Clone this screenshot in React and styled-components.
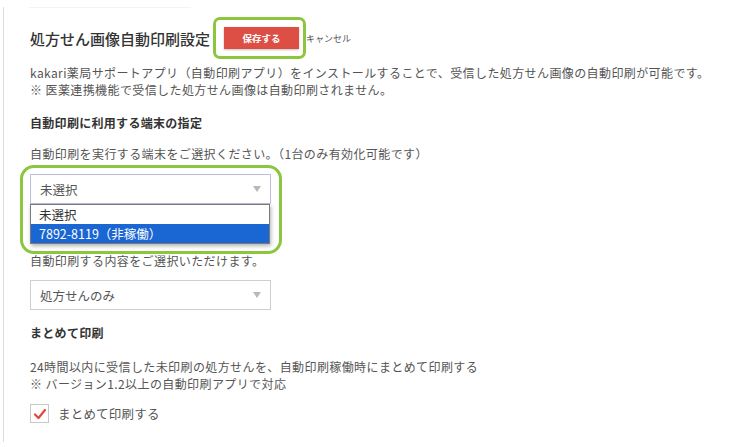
import React from 'react';
import styled, { createGlobalStyle } from 'styled-components';

const GlobalStyle = createGlobalStyle`
  html, body {
    margin: 0;
    padding: 0;
    background: #fff;
  }
  body {
    font-family: "Noto Sans CJK JP", "Noto Sans", sans-serif;
    color: #555;
  }
`;

const Panel = styled.div`
  position: relative;
  margin: 7px 0 0 3px;
  height: 435px;
  border-left: 1px solid #dcdcdc;
  padding: 10px 0 0 26px;
  box-sizing: border-box;

  &::before {
    content: '';
    position: absolute;
    top: 0;
    left: 25px;
    width: 162px;
    height: 1px;
    background: #f3f3f3;
  }
`;

const Header = styled.div`
  display: flex;
  align-items: center;
  height: 42px;
`;

const Title = styled.h1`
  margin: 0 3px 0 0;
  font-size: 15px;
  font-weight: 500;
  color: #333;
  letter-spacing: 0;
`;

const Highlight = styled.div`
  border: 3px solid #8cc63f;
  border-radius: 7px;
  padding: 7px 4px 7px 8px;
  display: flex;
`;

const SaveButton = styled.button`
  width: 75px;
  height: 22px;
  border: none;
  background: #dd4f45;
  box-shadow: 0 1px 2px rgba(0, 0, 0, 0.25);
  color: #fff;
  font-family: inherit;
  font-size: 9.5px;
  font-weight: 700;
  cursor: pointer;
`;

const CancelLink = styled.span`
  font-size: 9px;
  color: #555;
`;

const Text = styled.p`
  margin: ${(p) => p.mt || 0}px 0 0;
  font-size: 12px;
  line-height: 17px;
  letter-spacing: 0.4px;
  color: #555;
`;

const Heading = styled.h2`
  margin: ${(p) => p.mt || 0}px 0 0;
  font-size: 12px;
  line-height: 17px;
  font-weight: 700;
  letter-spacing: 0.3px;
  color: #333;
`;

const SelectWrap = styled.div`
  position: relative;
  margin-top: ${(p) => p.mt || 0}px;
  width: 241px;
`;

const SelectBox = styled.div`
  height: 30px;
  box-sizing: border-box;
  border: 1px solid ${(p) => (p.focused ? '#bcbfdc' : '#cfcfcf')};
  background: #fff;
  display: flex;
  align-items: center;
  justify-content: space-between;
  padding: 0 9px 0 9px;
  font-size: 12.5px;
  color: #555;
`;

const Arrow = styled.span`
  width: 0;
  height: 0;
  border-left: 4px solid transparent;
  border-right: 4px solid transparent;
  border-top: 6px solid #b8b8b8;
`;

const OptionList = styled.ul`
  position: absolute;
  top: 30px;
  left: 0;
  width: 240px;
  margin: 0;
  padding: 0;
  list-style: none;
  background: #fff;
  border: 1px solid #7a7a7a;
  box-sizing: border-box;
  box-shadow: 1px 2px 4px rgba(0, 0, 0, 0.3);
  z-index: 2;
`;

const Option = styled.li`
  height: 19px;
  line-height: 19px;
  padding-left: 8px;
  font-size: 12.5px;
  color: ${(p) => (p.active ? '#fff' : '#333')};
  background: ${(p) => (p.active ? '#1a66d2' : '#fff')};
`;

const FocusRing = styled.div`
  position: absolute;
  left: -10px;
  top: -9px;
  width: 262px;
  height: 89px;
  box-sizing: border-box;
  border: 3px solid #8cc63f;
  border-radius: 14px;
  pointer-events: none;
  z-index: 3;
`;

const CheckRow = styled.label`
  display: flex;
  align-items: center;
  gap: 9px;
  margin-top: 12px;
  font-size: 12.5px;
  letter-spacing: 0.2px;
  color: #555;
`;

const CheckBox = styled.span`
  width: 19px;
  height: 19px;
  box-sizing: border-box;
  border: 1px solid #c8c8c8;
  display: flex;
  align-items: center;
  justify-content: center;
  background: #fff;
`;

const App = () => {
  return (
    <>
      <GlobalStyle />
      <Panel>
        <Header>
          <Title>処方せん画像自動印刷設定</Title>
          <Highlight>
            <SaveButton>保存する</SaveButton>
          </Highlight>
          <CancelLink>キャンセル</CancelLink>
        </Header>

        <Text mt={5}>
          kakari薬局サポートアプリ（自動印刷アプリ）をインストールすることで、受信した処方せん画像の自動印刷が可能です。
          <br />※ 医薬連携機能で受信した処方せん画像は自動印刷されません。
        </Text>

        <Heading mt={16}>自動印刷に利用する端末の指定</Heading>
        <Text mt={14}>自動印刷を実行する端末をご選択ください。（1台のみ有効化可能です）</Text>

        <SelectWrap mt={12}>
          <SelectBox focused>
            未選択
            <Arrow />
          </SelectBox>
          <OptionList>
            <Option>未選択</Option>
            <Option active>7892-8119（非稼働）</Option>
          </OptionList>
          <FocusRing />
        </SelectWrap>

        <Text mt={48}>自動印刷する内容をご選択いただけます。</Text>

        <SelectWrap mt={11}>
          <SelectBox>
            処方せんのみ
            <Arrow />
          </SelectBox>
        </SelectWrap>

        <Heading mt={14}>まとめて印刷</Heading>
        <Text mt={17}>
          24時間以内に受信した未印刷の処方せんを、自動印刷稼働時にまとめて印刷する
          <br />※ バージョン1.2以上の自動印刷アプリで対応
        </Text>

        <CheckRow>
          <CheckBox>
            <svg width="14" height="12" viewBox="0 0 14 12">
              <path d="M2 6.5 L5.5 10 L12 2" fill="none" stroke="#e2463c" strokeWidth="2.2" strokeLinecap="round" strokeLinejoin="round" />
            </svg>
          </CheckBox>
          まとめて印刷する
        </CheckRow>
      </Panel>
    </>
  );
};

export default App;
